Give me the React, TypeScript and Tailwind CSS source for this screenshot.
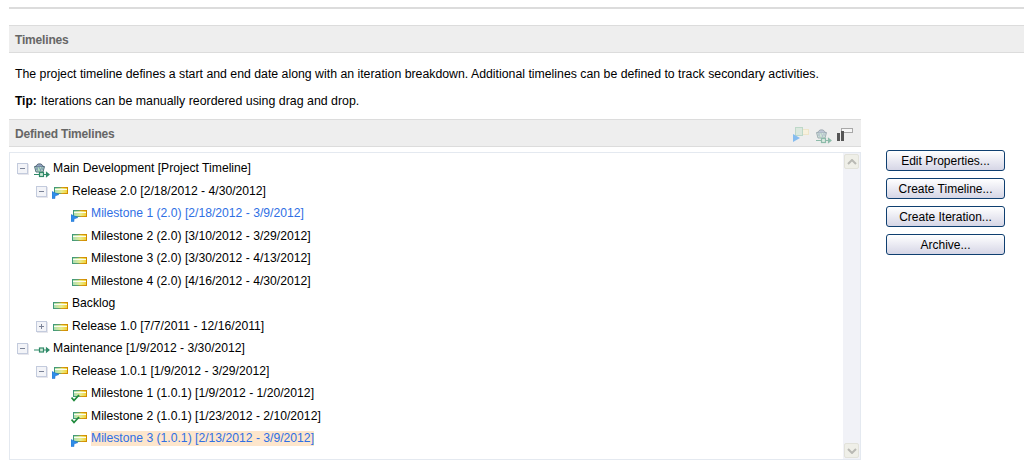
import React from "react";

type NodeIcon = "project" | "timeline" | "iter" | "current" | "done";

interface TreeNode {
  label: string;
  indent: string;
  icon: NodeIcon;
  toggle?: "minus" | "plus";
  link?: boolean;
  selected?: boolean;
}

const nodes: TreeNode[] = [
  { label: "Main Development [Project Timeline]", indent: "pl-[7px]", icon: "project", toggle: "minus" },
  { label: "Release 2.0 [2/18/2012 - 4/30/2012]", indent: "pl-[26px]", icon: "current", toggle: "minus" },
  { label: "Milestone 1 (2.0) [2/18/2012 - 3/9/2012]", indent: "pl-[45px]", icon: "current", link: true },
  { label: "Milestone 2 (2.0) [3/10/2012 - 3/29/2012]", indent: "pl-[45px]", icon: "iter" },
  { label: "Milestone 3 (2.0) [3/30/2012 - 4/13/2012]", indent: "pl-[45px]", icon: "iter" },
  { label: "Milestone 4 (2.0) [4/16/2012 - 4/30/2012]", indent: "pl-[45px]", icon: "iter" },
  { label: "Backlog", indent: "pl-[26px]", icon: "iter" },
  { label: "Release 1.0 [7/7/2011 - 12/16/2011]", indent: "pl-[26px]", icon: "iter", toggle: "plus" },
  { label: "Maintenance [1/9/2012 - 3/30/2012]", indent: "pl-[7px]", icon: "timeline", toggle: "minus" },
  { label: "Release 1.0.1 [1/9/2012 - 3/29/2012]", indent: "pl-[26px]", icon: "current", toggle: "minus" },
  { label: "Milestone 1 (1.0.1) [1/9/2012 - 1/20/2012]", indent: "pl-[45px]", icon: "done" },
  { label: "Milestone 2 (1.0.1) [1/23/2012 - 2/10/2012]", indent: "pl-[45px]", icon: "done" },
  { label: "Milestone 3 (1.0.1) [2/13/2012 - 3/9/2012]", indent: "pl-[45px]", icon: "current", link: true, selected: true },
];

const buttons = ["Edit Properties...", "Create Timeline...", "Create Iteration...", "Archive..."];

function Gradients() {
  return (
    <svg width="0" height="0" className="absolute">
      <defs>
        <linearGradient id="barEdge" x1="0" x2="1" y1="0" y2="0">
          <stop offset="0" stopColor="#3f9a7a" />
          <stop offset="0.4" stopColor="#5fa070" />
          <stop offset="0.6" stopColor="#d79a10" />
          <stop offset="1" stopColor="#d08c00" />
        </linearGradient>
        <linearGradient id="barFill" x1="0" x2="1" y1="0" y2="0">
          <stop offset="0" stopColor="#a9dcb4" />
          <stop offset="0.55" stopColor="#e6ec90" />
          <stop offset="1" stopColor="#f5d030" />
        </linearGradient>
      </defs>
    </svg>
  );
}

// Iteration bar, optionally with a status mark at its lower left
function BarIcon({ mark }: { mark?: "play" | "check" }) {
  const x = mark ? 2.5 : 1.5;
  const y = mark ? 4.5 : 6.5;
  const w = mark ? 13 : 14;
  return (
    <svg width="17" height="16" viewBox="0 0 17 16" className="shrink-0">
      <rect x={x} y={y} width={w} height="6" fill="url(#barFill)" stroke="url(#barEdge)" />
      <rect x={x + 0.5} y={y + 1.5} width={w - 1} height="1" fill="#fbfbf2" />
      {mark === "play" && <path d="M0 8.5 L7 11.5 L3 13 L3 15.5 L0 15.5 Z" fill="#2f8de8" stroke="#1c6fd0" strokeWidth="0.5" />}
      {mark === "check" && <path d="M0.5 11.5 L3 14.5 L8 9" fill="none" stroke="#1f8a3c" strokeWidth="1.8" />}
    </svg>
  );
}

function TimelineLine() {
  return (
    <g fill="none" stroke="#2f8a68" strokeWidth="1.2">
      <path d="M1 14.5 H6.5 M10.5 14.5 H14" />
      <rect x="6.5" y="12.5" width="4" height="4" fill="#cfe8d8" />
      <path d="M13.5 12.5 L16 14.5 L13.5 16.5 Z" fill="#2f8a68" />
    </g>
  );
}

function ProjectIcon() {
  return (
    <svg width="17" height="18" viewBox="0 0 17 18" className="shrink-0">
      <path d="M1.5 6.5 H11.5 L10 12 H3 Z" fill="#b4e0bf" stroke="#55707f" />
      <path d="M3 7 L5 11 M6 7 L8 11 M9 7 L7 11 M5 7 L3.5 10 M10.5 7 L9 10" stroke="#7388b0" strokeWidth="0.8" />
      <path d="M3 6.5 C3.5 3 9.5 3 10 6.5" fill="#8fa2c0" stroke="#44586a" />
      <TimelineLine />
    </svg>
  );
}

function TimelineIcon() {
  return (
    <svg width="17" height="16" viewBox="0 0 17 16" className="shrink-0">
      <g transform="translate(0 -5.5)">
        <TimelineLine />
      </g>
    </svg>
  );
}

function NodeGlyph({ icon }: { icon: NodeIcon }) {
  if (icon === "project") return <ProjectIcon />;
  if (icon === "timeline") return <TimelineIcon />;
  if (icon === "current") return <BarIcon mark="play" />;
  if (icon === "done") return <BarIcon mark="check" />;
  return <BarIcon />;
}

function Toggle({ kind }: { kind?: "minus" | "plus" }) {
  if (!kind) return <span className="w-[11px] shrink-0" />;
  return (
    <span className="relative w-[11px] h-[11px] shrink-0 border border-[#c3cbdd] bg-[#f3f4f8] shadow-[1px_1px_0_#e6e6ec]">
      <span className="absolute left-[2px] top-[4px] w-[5px] h-px bg-[#7a8296]" />
      {kind === "plus" && <span className="absolute left-[4px] top-[2px] w-px h-[5px] bg-[#7a8296]" />}
    </span>
  );
}

function SectionHeader({ title, children }: { title: string; children?: React.ReactNode }) {
  return (
    <div className="flex items-center justify-between h-[28px] pl-[6px] bg-[#eeeeee] border-y border-[#dcdcdc]">
      <span className="pt-[2px] font-bold text-[12px] tracking-[-0.17px] text-[#666666]">{title}</span>
      {children}
    </div>
  );
}

function ScrollArrow({ down }: { down?: boolean }) {
  return (
    <div className="flex items-center justify-center w-[15px] h-[15px] rounded-[2px] bg-[#efefe8] border border-[#e2e2da]">
      <svg width="10" height="6" viewBox="0 0 10 6">
        <path d={down ? "M1 1 L5 5 L9 1" : "M1 5 L5 1 L9 5"} fill="none" stroke="#b9b9b4" strokeWidth="2" />
      </svg>
    </div>
  );
}

export default function App() {
  return (
    <div className="w-[1033px] h-[469px] overflow-hidden bg-white text-black text-[12px] font-['Liberation_Sans',Arial,sans-serif] leading-none">
      <Gradients />
      <div className="flex flex-col pt-[7px] pl-[9px] pr-[9px]">
        <div className="h-[2px] bg-[#dcdcdc]" />
        <div className="mt-[16px]">
          <SectionHeader title="Timelines" />
        </div>
        <p className="mt-[15px] pl-[6px] h-[12px] text-[12.3px] whitespace-nowrap">
          The project timeline defines a start and end date along with an iteration breakdown. Additional timelines can be defined to track secondary activities.
        </p>
        <p className="mt-[15px] pl-[6px] h-[12px] text-[12.3px] whitespace-nowrap">
          <b className="text-[12px]">Tip:</b>
          <span className="ml-[4px] text-[12.38px]">Iterations can be manually reordered using drag and drop.</span>
        </p>
        <div className="flex mt-[12px] gap-[25px]">
          <div className="flex flex-col w-[852px]">
            <SectionHeader title="Defined Timelines">
              <div className="flex items-center gap-[5px] pr-[8px] pt-[4px]">
                <svg width="17" height="16" viewBox="0 0 17 16" className="shrink-0 opacity-70">
                  <rect x="9.5" y="2.5" width="6" height="5" fill="#fbf3d8" stroke="#efe2bc" />
                  <rect x="2.5" y="0.5" width="7" height="8" fill="#d3e6d8" stroke="#a9d0b8" />
                  <path d="M0 7 L7 11 L0 15 Z" fill="#5aa8f0" />
                </svg>
                <span className="opacity-50"><ProjectIcon /></span>
                <svg width="16" height="16" viewBox="0 0 16 16" className="shrink-0">
                  <rect x="4.5" y="1.5" width="11" height="4" fill="#f6f6f6" stroke="#a8a8a8" />
                  <path d="M0 6 H3 V14 H0 Z M4 4 H7 V14 H4 Z" fill="#555555" />
                </svg>
              </div>
            </SectionHeader>
            <div className="flex h-[308px] mt-[5px] border border-[#e4e9f0]">
              <div className="flex-1 pt-[4.5px]">
                {nodes.map((node) => (
                  <div key={node.label} className={`flex items-center h-[22.5px] ${node.indent}`}>
                    <Toggle kind={node.toggle} />
                    <span className="ml-[5px] flex items-center"><NodeGlyph icon={node.icon} /></span>
                    <span
                      className={`ml-[3px] whitespace-nowrap text-[12.17px] leading-[15px] ${node.link ? "text-[#2f6fe4]" : ""} ${node.selected ? "bg-[#fde6cc]" : ""}`}
                    >
                      {node.label}
                    </span>
                  </div>
                ))}
              </div>
              <div className="flex flex-col justify-between items-center w-[17px] py-px bg-[#f1f2f7]">
                <ScrollArrow />
                <ScrollArrow down />
              </div>
            </div>
          </div>
          <div className="flex flex-col gap-[7px] pt-[31px]">
            {buttons.map((label) => (
              <button
                key={label}
                className="w-[119px] h-[21px] rounded-[3px] border border-[#0f3f70] bg-gradient-to-b from-white to-[#d6d6e6] text-center"
              >
                {label}
              </button>
            ))}
          </div>
        </div>
      </div>
    </div>
  );
}
